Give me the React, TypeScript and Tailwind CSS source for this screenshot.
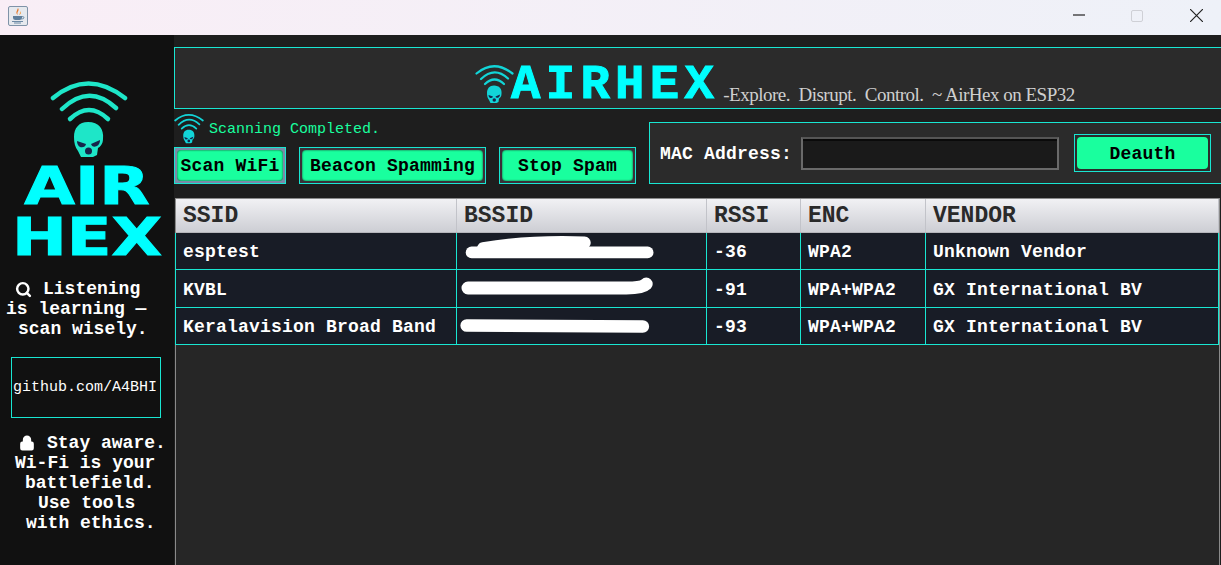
import { Search, Lock } from 'lucide-react';

const rows = [
  { ssid: 'esptest', rssi: '-36', enc: 'WPA2', vendor: 'Unknown Vendor', h: 'h-[37px]' },
  { ssid: 'KVBL', rssi: '-91', enc: 'WPA+WPA2', vendor: 'GX International BV', h: 'h-[38px]' },
  { ssid: 'Keralavision Broad Band', rssi: '-93', enc: 'WPA+WPA2', vendor: 'GX International BV', h: 'h-[37px]' },
];

// hand-drawn white scribbles hiding the BSSIDs
const scribbles = [
  <g key="a">
    <path d="M12 20 L193 20" strokeWidth="12" />
    <path d="M24 16 Q70 8 128 10" strokeWidth="13" />
  </g>,
  <g key="b">
    <path d="M11 18 L170 18 Q186 18 190 14" strokeWidth="13" />
  </g>,
  <g key="c">
    <path d="M7 18 L188 19" strokeWidth="13" />
  </g>,
];

function WifiSkull({ className }: { className: string }) {
  return (
    <svg viewBox="0 0 78 78" className={className} fill="none" stroke="currentColor" strokeLinecap="round">
      <path d="M3 17 Q38 -12 75 17" strokeWidth="4.5" />
      <path d="M12 28 Q39 2 66 27" strokeWidth="4.5" />
      <path d="M20 38 Q39 20 58 38" strokeWidth="4.5" />
      <path
        d="M38 41 C49 41 54 48 53 58 C53 63 50 66 48 67 L47 74 L43 76 L31 76 L28 70 C25 66 24 62 24 56 C24 47 29 41 38 41Z"
        fill="currentColor"
        stroke="none"
      />
      <path d="M27 60 L36 63 Q35 67 30 66 Q27 64 27 60Z" fill="#16244a" stroke="none" />
      <path d="M50 59 L41 63 Q42 67 47 65 Q50 63 50 59Z" fill="#16244a" stroke="none" />
      <ellipse cx="38.5" cy="70" rx="3.5" ry="3.5" fill="#16244a" stroke="none" />
    </svg>
  );
}

function JavaIcon() {
  return (
    <div className="w-5 h-5 rounded-[2px] border border-[#7f93a8] bg-[#e6e9ee] flex items-center justify-center">
      <svg viewBox="0 0 18 18" className="w-[18px] h-[18px]" fill="none">
        <path d="M9 1 C11 4 7 5 9 8 C6 6 8 4 9 1Z" fill="#e8792b" />
        <path d="M11 4 C12 6 10 7 10 8 C12 7 13 6 11 4Z" fill="#f0a050" />
        <path d="M4 9 H13 V11 Q13 13 10.5 13 H6.5 Q4 13 4 11Z" fill="#5f7f9c" />
        <path d="M13 9.5 Q15.5 9.5 15 11 Q14.5 12 12.5 12" stroke="#5f7f9c" strokeWidth="0.8" />
        <path d="M3 14.5 H14 M5 16 H12" stroke="#5f7f9c" strokeWidth="0.9" />
      </svg>
    </div>
  );
}

function SpamButton({ label, outer }: { label: string; outer: string }) {
  return (
    <div className={`border border-[#19e6d2] h-[37px] p-[2px] ${outer}`}>
      <button className="w-full h-full pt-[1px] rounded-[4px] bg-[#19ff9e] text-black text-[18px] tracking-[0.2px] font-bold leading-none shadow-[inset_0_0_2px_#222]">
        {label}
      </button>
    </div>
  );
}

export default function App() {
  return (
    <div className="w-[1221px] h-[565px] overflow-hidden flex flex-col bg-[#1e1e1e] font-['Liberation_Mono',monospace]">
      {/* Title bar */}
      <div className="h-[35px] shrink-0 flex items-start bg-gradient-to-r from-[#f9eef6] to-[#eef1f8]">
        <div className="ml-2 mt-[6px]">
          <JavaIcon />
        </div>
        <div className="ml-auto flex items-start">
          <svg viewBox="0 0 12 12" className="w-3 h-3 mt-[9px] mr-[46px]" stroke="#222" strokeWidth="1.2">
            <path d="M0 6 H12" />
          </svg>
          <div className="w-3 h-3 mt-[10px] mr-[47px] rounded-[2px] border border-[#cfd0d6]" />
          <svg viewBox="0 0 12 12" className="w-[13px] h-[13px] mt-[9px] mr-[18px]" stroke="#222" strokeWidth="1.1">
            <path d="M0 0 L12 12 M12 0 L0 12" />
          </svg>
        </div>
      </div>

      <div className="flex-1 flex min-h-0">
        {/* Sidebar */}
        <aside className="w-[174px] shrink-0 bg-[#111111] flex flex-col text-white">
          <WifiSkull className="w-[78px] h-[78px] ml-[50px] mt-[46px] text-[#1ee6c8]" />
          <div className="mt-[2px] h-[102px] text-center font-['DejaVu_Sans',sans-serif] font-bold text-[#00ffff] text-[52px] leading-[51px] scale-x-[1.26] [-webkit-text-stroke:1px_#00ffff]">
            AIR
            <br />
            HEX
          </div>
          <div className="mt-[16px] text-[18px] font-bold leading-[20px] whitespace-pre">
            <div className="pl-[15px] flex items-center">
              <Search className="w-[17px] h-[17px]" strokeWidth={3.5} />
              <span className="ml-[11px]">Listening</span>
            </div>
            <div className="pl-[6px]">is learning —</div>
            <div className="pl-[18px]">scan wisely.</div>
          </div>
          <div className="mt-[18px] ml-[11px] w-[150px] h-[61px] border border-[#19e6d2] flex items-center justify-center pr-[2px] text-[15px] leading-none">
            github.com/A4BHI
          </div>
          <div className="mt-[15px] text-[18px] font-bold leading-[20px] whitespace-pre">
            <div className="pl-[19px] flex items-center">
              <Lock className="w-[16px] h-[18px]" fill="white" strokeWidth={2.5} />
              <span className="ml-[12px]">Stay aware.</span>
            </div>
            <div className="pl-[15px]">Wi-Fi is your</div>
            <div className="pl-[25px]">battlefield.</div>
            <div className="pl-[38px]">Use tools</div>
            <div className="pl-[26px]">with ethics.</div>
          </div>
        </aside>

        {/* Main column */}
        <main className="flex-1 min-w-0 flex flex-col">
          <header className="mt-[12px] h-[62px] shrink-0 border-y border-l border-[#19e6d2] bg-[#2b2b2b] flex items-end pl-[300px] whitespace-pre">
            <WifiSkull className="w-[39px] h-[39px] mb-[4px] text-[#12d5d8]" />
            <span className="-ml-[3px] mb-[-2px] text-[49px] tracking-[5.3px] font-bold leading-[50px] text-[#00ffff] [-webkit-text-stroke:1px_#00ffff]">AIRHEX</span>
            <span className="ml-[4px] mb-[1px] font-['Liberation_Serif',serif] text-[19px] tracking-[-0.5px] leading-[24px] text-[#cfcfcf]">
              -Explore.  Disrupt.  Control.  ~ AirHex on ESP32
            </span>
          </header>

          <div className="h-[89px] shrink-0 flex">
            <div className="w-[475px] shrink-0">
              <div className="mt-[5px] h-[30px] flex items-center">
                <WifiSkull className="w-[30px] h-[30px] text-[#12d5d8]" />
                <span className="ml-[5px] text-[15px] leading-none text-[#19ff9e]">Scanning Completed.</span>
              </div>
              <div className="mt-[3px] flex gap-[13px]">
                <SpamButton label="Scan WiFi" outer="w-[112px] bg-[#7b8aa8]" />
                <SpamButton label="Beacon Spamming" outer="w-[187px] bg-[#3a3038]" />
                <SpamButton label="Stop Spam" outer="w-[137px] bg-[#3a3038]" />
              </div>
            </div>
            <div className="mt-[13px] h-[62px] flex-1 border-y border-l border-[#19e6d2] bg-[#2b2b2b] flex items-center pl-[10px]">
              <span className="pt-[1px] text-[18px] tracking-[0.2px] font-bold leading-none text-white whitespace-pre">MAC Address:</span>
              <div className="ml-[9px] w-[258px] h-[33px] border-2 border-[#6a6a6a] bg-[#1a1a1a] border-t-[#555] shadow-[inset_0_2px_0_#0a0a0a]" />
              <div className="ml-[15px] w-[137px] h-[38px] border border-[#19e6d2] p-[2px]">
                <button className="w-full h-full pt-[1px] rounded-[4px] bg-[#19ff9e] text-black text-[18px] tracking-[0.2px] font-bold leading-none">
                  Deauth
                </button>
              </div>
            </div>
          </div>

          {/* Results table */}
          <section className="flex-1 min-h-0 ml-[1px] mr-[1px] border-x border-t border-[#8a8a8a] bg-[#262626]">
            <div className="grid grid-cols-[281px_250px_94px_125px_293px] h-[34px] bg-gradient-to-b from-[#f1f1f4] to-[#cdced4] text-[23px] leading-none text-[#2a2a2a] border-b border-[#b5b5bb]">
              {['SSID', 'BSSID', 'RSSI', 'ENC', 'VENDOR'].map((h) => (
                <div key={h} className="flex items-center pl-[7px] pt-[2px] border-r border-[#c2c3c9] font-bold">
                  {h}
                </div>
              ))}
            </div>
            {rows.map((r, i) => (
              <div
                key={r.ssid}
                className={`grid grid-cols-[281px_250px_94px_125px_293px] ${r.h} bg-[#181c26] text-white text-[18px] tracking-[0.2px] font-bold leading-none`}
              >
                <div className="flex items-center pl-[7px] pt-[2px] border-r border-b border-l border-[#19e6d2] -ml-px whitespace-pre">{r.ssid}</div>
                <div className="relative border-r border-b border-[#19e6d2]">
                  <svg viewBox="0 0 250 37" className="absolute inset-0 w-full h-full" fill="none" stroke="white" strokeLinecap="round">
                    {scribbles[i]}
                  </svg>
                </div>
                <div className="flex items-center pl-[7px] pt-[2px] border-r border-b border-[#19e6d2]">{r.rssi}</div>
                <div className="flex items-center pl-[7px] pt-[2px] border-r border-b border-[#19e6d2]">{r.enc}</div>
                <div className="flex items-center pl-[7px] pt-[2px] border-r border-b border-[#19e6d2] whitespace-pre">{r.vendor}</div>
              </div>
            ))}
          </section>
        </main>
      </div>
    </div>
  );
}
